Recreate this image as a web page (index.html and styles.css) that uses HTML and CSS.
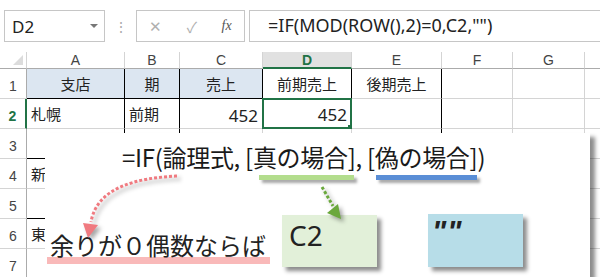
FILE: index.html
```html
<!DOCTYPE html>
<html lang="ja">
<head>
    <meta charset="UTF-8">
    <title>IF MOD ROW</title>
    <link rel="stylesheet" href="styles.css">
</head>
<body>

    <!-- Formula toolbar -->
    <div class="toolbar">
        <div class="name-box">
            <span>D2</span>
            <span class="drop"></span>
        </div>
        <div class="grip">⋮</div>
        <div class="buttons">
            <span class="btn">✕</span>
            <span class="btn">✓</span>
            <span class="btn fx">fx</span>
        </div>
        <div class="formula">=IF(MOD(ROW(),2)=0,C2,"")</div>
    </div>

    <!-- Sheet -->
    <div class="sheet">
        <div class="grid">
            <div class="hd corner"><span class="tri"></span></div>
            <div class="hd">A</div>
            <div class="hd">B</div>
            <div class="hd">C</div>
            <div class="hd active">D</div>
            <div class="hd">E</div>
            <div class="hd">F</div>
            <div class="hd">G</div>
            <div class="hd last"></div>

            <div class="rh">1</div>
            <div class="c fill center bb br">支店</div>
            <div class="c fill center bb br">期</div>
            <div class="c fill center bb br">売上</div>
            <div class="c center br">前期売上</div>
            <div class="c center br">後期売上</div>
            <div class="c"></div>
            <div class="c"></div>
            <div class="c last"></div>

            <div class="rh active">2</div>
            <div class="c br">札幌</div>
            <div class="c br">前期</div>
            <div class="c num">452</div>
            <div class="c num sel">452<span class="handle"></span></div>
            <div class="c br"></div>
            <div class="c"></div>
            <div class="c"></div>
            <div class="c last"></div>

            <div class="rh">3</div>
            <div class="c br bb"></div>
            <div class="c br"></div>
            <div class="c"></div>
            <div class="c"></div>
            <div class="c br"></div>
            <div class="c"></div>
            <div class="c"></div>
            <div class="c last"></div>

            <div class="rh">4</div>
            <div class="c">新</div>
            <div class="c"></div>
            <div class="c"></div>
            <div class="c"></div>
            <div class="c"></div>
            <div class="c"></div>
            <div class="c"></div>
            <div class="c last"></div>

            <div class="rh">5</div>
            <div class="c bb"></div>
            <div class="c"></div>
            <div class="c"></div>
            <div class="c"></div>
            <div class="c"></div>
            <div class="c"></div>
            <div class="c"></div>
            <div class="c last"></div>

            <div class="rh">6</div>
            <div class="c">東</div>
            <div class="c"></div>
            <div class="c"></div>
            <div class="c"></div>
            <div class="c"></div>
            <div class="c"></div>
            <div class="c"></div>
            <div class="c last"></div>

            <div class="rh">7</div>
            <div class="c"></div>
            <div class="c"></div>
            <div class="c"></div>
            <div class="c"></div>
            <div class="c"></div>
            <div class="c"></div>
            <div class="c"></div>
            <div class="c last"></div>
        </div>

        <!-- Explanation callout over the sheet -->
        <div class="callout">
            <div class="syntax">=IF(論理式, [<span class="mark true">真の場合]</span>, <span class="mark false">[偽の場合]</span>)</div>
            <div class="answers">
                <div class="cond">
                    <div class="cond-text">余りが０偶数ならば</div>
                    <div class="cond-bar"></div>
                </div>
                <div class="box green">C2</div>
                <div class="box blue">""</div>
            </div>

            <svg class="arrows" width="545" height="144" viewBox="0 0 545 144">
                <path d="M132 43 C 92 45, 52 54, 46 89" fill="none" stroke="#f07a80" stroke-width="3" stroke-dasharray="3 2"/>
                <polygon points="38,90 53,92 43,105" fill="#f07a80"/>
                <path d="M277 54 L 288 73" fill="none" stroke="#6aa83c" stroke-width="3" stroke-dasharray="3 2"/>
                <polygon points="293,71 282,80 296,86" fill="#6aa83c"/>
            </svg>
        </div>
    </div>

</body>
</html>
```

FILE: styles.css
```css
body {
    margin: 0;
    padding: 0;
    background-color: #fff;
    font-family: "Noto Sans", "Noto Sans CJK JP", sans-serif;
    color: #222;
    overflow: hidden;
}

/* toolbar */

.toolbar {
    display: flex;
    align-items: center;
    height: 52px;
    padding-left: 4px;
    box-sizing: border-box;
    padding-bottom: 10px;
    padding-top: 10px;
}

.name-box {
    display: flex;
    align-items: center;
    justify-content: space-between;
    width: 101px;
    height: 32px;
    border: 1px solid #c6c6c6;
    box-sizing: border-box;
    padding: 0 6px 0 7px;
    font-size: 17px;
}

.drop {
    width: 0;
    height: 0;
    border-left: 4px solid transparent;
    border-right: 4px solid transparent;
    border-top: 4px solid #777;
}

.grip {
    width: 31px;
    text-align: center;
    color: #aaa;
    font-size: 14px;
}

.buttons {
    display: flex;
    align-items: center;
    justify-content: space-around;
    width: 109px;
    height: 32px;
    border: 1px solid #c6c6c6;
    box-sizing: border-box;
    color: #b0b0b0;
    font-size: 15px;
}

.fx {
    font-family: "Liberation Serif", serif;
    font-style: italic;
    color: #555;
    font-size: 14px;
}

.formula {
    flex: 1;
    height: 32px;
    margin-left: 4px;
    border: 1px solid #c6c6c6;
    border-right: none;
    box-sizing: border-box;
    padding-left: 18px;
    font-size: 18px;
    line-height: 28px;
    color: #222;
}

/* sheet */

.sheet {
    position: relative;
}

.grid {
    display: grid;
    grid-template-columns: 27px 98px 55px 83px 89px 90px 71px 72px 1fr;
    grid-template-rows: 17px repeat(7, 30px);
    font-size: 15px;
}

.hd {
    display: flex;
    align-items: center;
    justify-content: center;
    border-right: 1px solid #d4d4d4;
    border-bottom: 1px solid #ababab;
    color: #444;
    font-family: "Liberation Sans", sans-serif;
    font-size: 14px;
    box-sizing: border-box;
}

.hd.active {
    background-color: #e1e1e1;
    border-bottom: 2px solid #217346;
    color: #217346;
    font-weight: bold;
}

.corner {
    position: relative;
}

.tri {
    position: absolute;
    right: 3px;
    bottom: 3px;
    width: 0;
    height: 0;
    border-left: 10px solid transparent;
    border-bottom: 10px solid #dcdcdc;
}

.rh {
    display: flex;
    align-items: flex-end;
    justify-content: center;
    padding-bottom: 4px;
    border-right: 1px solid #ababab;
    border-bottom: 1px solid #d4d4d4;
    color: #444;
    font-family: "Liberation Sans", sans-serif;
    font-size: 14px;
    box-sizing: border-box;
}

.rh.active {
    color: #217346;
    font-weight: bold;
    border-right: 2px solid #217346;
}

.c {
    display: flex;
    align-items: flex-end;
    padding: 0 4px 4px;
    border-right: 1px solid #d4d4d4;
    border-bottom: 1px solid #d4d4d4;
    box-sizing: border-box;
    font-family: "Noto Sans CJK JP", sans-serif;
    white-space: nowrap;
    overflow: hidden;
}

.last {
    border-right: none;
}

.fill {
    background-color: #dce6f1;
}

.center {
    justify-content: center;
}

.num {
    justify-content: flex-end;
    font-family: "Noto Sans", sans-serif;
    font-size: 17px;
    padding-bottom: 1px;
}

.br {
    border-right: 1px solid #000;
}

.bb {
    border-bottom: 1px solid #000;
}

.sel {
    position: relative;
    border: 2px solid #217346;
    margin: -1px 0 0 -1px;
    padding-right: 3px;
}

.handle {
    position: absolute;
    right: -4px;
    bottom: -4px;
    width: 5px;
    height: 5px;
    background-color: #217346;
    border: 1px solid #fff;
}

/* callout */

.callout {
    position: absolute;
    left: 45px;
    top: 81px;
    width: 545px;
    height: 144px;
    background-color: #fff;
    box-shadow: 5px 4px 4px rgba(0, 0, 0, 0.45);
    font-family: "Noto Sans CJK JP", sans-serif;
}

.syntax {
    padding: 9px 0 0 77px;
    font-size: 24px;
    line-height: 30px;
    color: #1a1a1a;
    letter-spacing: -0.3px;
}

.mark {
    position: relative;
}

.mark::after {
    content: "";
    position: absolute;
    left: 0;
    right: 0;
    bottom: -6px;
    height: 5px;
    box-shadow: 3px 3px 3px rgba(0, 0, 0, 0.35);
}

.true::after {
    left: 6px;
    right: 2px;
    background-color: #b3dd8d;
}

.false::after {
    left: 9px;
    background-color: #5a8ed6;
}

.answers {
    display: flex;
    align-items: flex-end;
    margin-top: 42px;
}

.cond {
    margin-left: 2px;
    margin-bottom: 3px;
    width: 223px;
}

.cond-text {
    font-size: 24px;
    line-height: 24px;
    padding-left: 3px;
    color: #222;
}

.cond-bar {
    height: 7px;
    background-color: #f9b9b9;
}

.box {
    width: 95px;
    height: 52px;
    box-sizing: border-box;
    box-shadow: 4px 4px 4px rgba(0, 0, 0, 0.45);
}

.green {
    margin-left: 12px;
    background-color: #e2f0d9;
    font-family: "Noto Sans", sans-serif;
    font-size: 28px;
    line-height: 28px;
    padding: 6px 0 0 7px;
}

.blue {
    margin-left: 51px;
    height: 53px;
    background-color: #b7dde8;
    font-family: "Liberation Sans", sans-serif;
    font-weight: bold;
    font-style: italic;
    font-size: 30px;
    line-height: 30px;
    padding: 2px 0 0 4px;
    letter-spacing: 1px;
}

.arrows {
    position: absolute;
    left: 0;
    top: 0;
    filter: drop-shadow(3px 3px 2px rgba(0, 0, 0, 0.35));
    pointer-events: none;
}
```
